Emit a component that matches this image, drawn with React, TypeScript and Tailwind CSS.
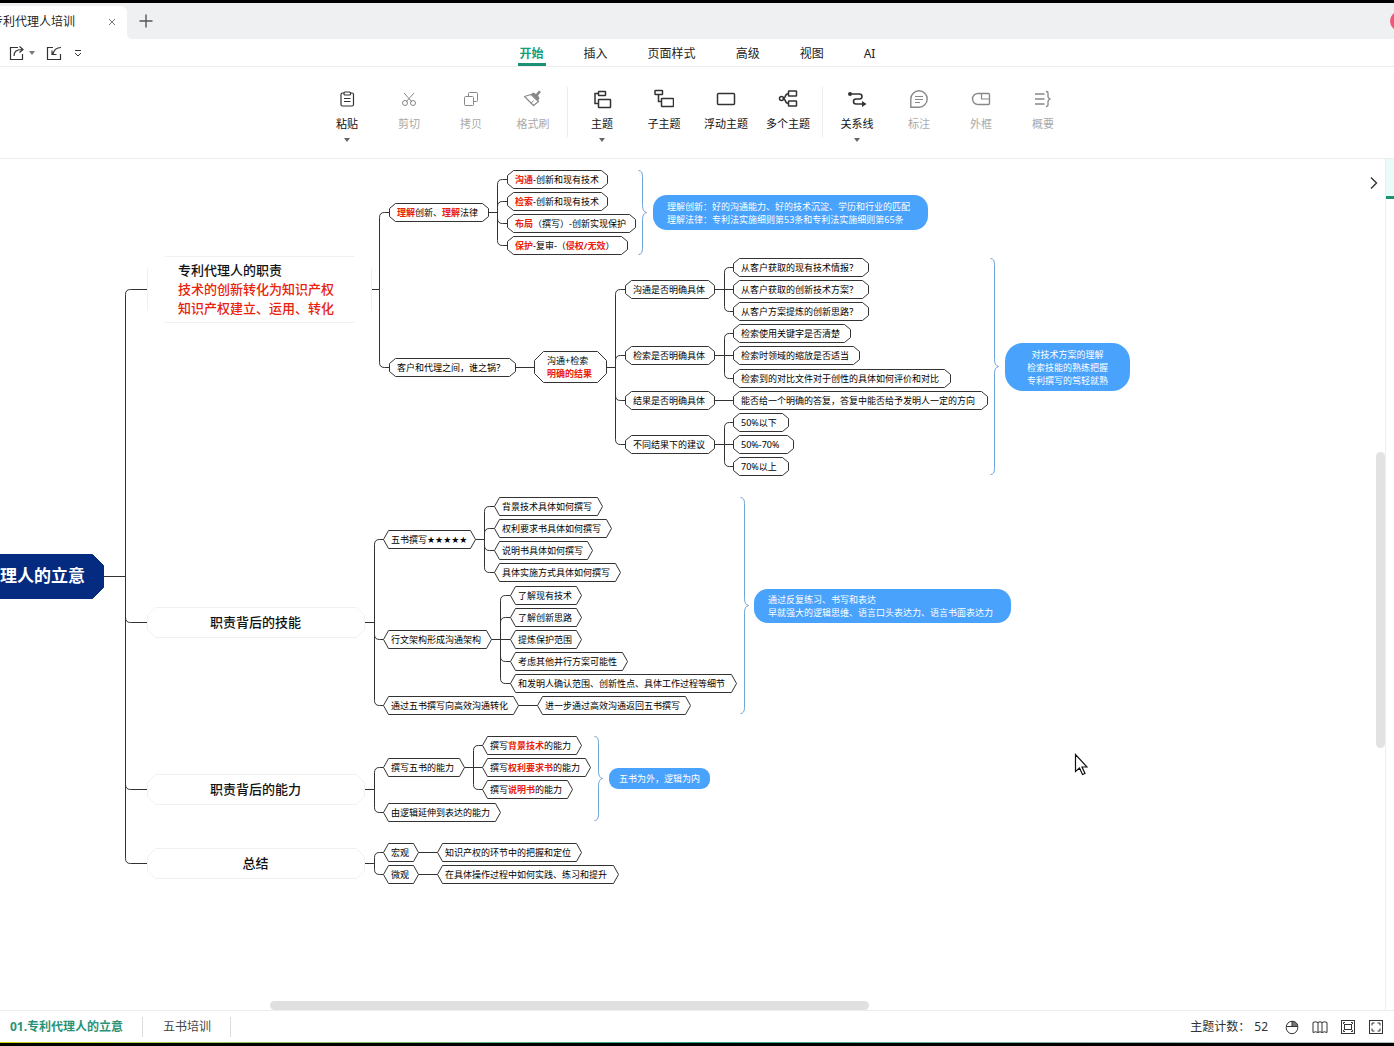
import React from "react";
import { clsx } from "clsx";

type Shape = "cut" | "hex" | "soft" | "root";

type Topic = {
	x: number;
	y: number;
	w: number;
	h?: number;
	shape: Shape;
	// lines of text, parts between asterisks are highlighted
	lines: string[];
	// x of the vertical line that leads to the children
	spine?: number;
	children?: Topic[];
};

const cut = (x: number, y: number, w: number, text: string, spine?: number, children?: Topic[]): Topic => ({
	x, y, w, shape: "cut", lines: [text], spine, children,
});

const hex = (x: number, y: number, w: number, text: string, spine?: number, children?: Topic[]): Topic => ({
	x, y, w, shape: "hex", lines: [text], spine, children,
});

const map: Topic = {
	x: -90, y: 395, w: 193, h: 44, shape: "root", lines: ["专利代理人的立意"], spine: 125,
	children: [
		{
			x: 147, y: 97, w: 224, h: 66, shape: "soft", spine: 379,
			lines: ["专利代理人的职责", "*技术的创新转化为知识产权*", "*知识产权建立、运用、转化*"],
			children: [
				cut(389, 44, 99, "*理解*创新、*理解*法律", 497, [
					cut(507, 11, 100, "*沟通*-创新和现有技术"),
					cut(507, 33, 100, "*检索*-创新和现有技术"),
					cut(507, 55, 128, "*布局*（撰写）-创新实现保护"),
					cut(507, 77, 120, "*保护*-复审-（*侵权/无效*）"),
				]),
				cut(389, 199, 126, "客户和代理之间，谁之锅？", 525, [
					{
						x: 534, y: 192, w: 72, h: 31, shape: "cut", spine: 615,
						lines: ["沟通+检索", "*明确的结果*"],
						children: [
							cut(625, 121, 89, "沟通是否明确具体", 724, [
								cut(733, 99, 135, "从客户获取的现有技术情报？"),
								cut(733, 121, 135, "从客户获取的创新技术方案？"),
								cut(733, 143, 135, "从客户方案提炼的创新思路？"),
							]),
							cut(625, 187, 89, "检索是否明确具体", 724, [
								cut(733, 165, 117, "检索使用关键字是否清楚"),
								cut(733, 187, 126, "检索时领域的缩放是否适当"),
								cut(733, 210, 217, "检索到的对比文件对于创性的具体如何评价和对比"),
							]),
							cut(625, 232, 89, "结果是否明确具体", 724, [
								cut(733, 232, 254, "能否给一个明确的答复，答复中能否给予发明人一定的方向"),
							]),
							cut(625, 276, 89, "不同结果下的建议", 724, [
								cut(733, 254, 55, "50%以下"),
								cut(733, 276, 60, "50%-70%"),
								cut(733, 298, 55, "70%以上"),
							]),
						],
					},
				]),
			],
		},
		{
			x: 147, y: 448, w: 217, h: 30, shape: "soft", lines: ["职责背后的技能"], spine: 374,
			children: [
				hex(383, 371, 92, "五书撰写★★★★★", 484, [
					hex(494, 338, 108, "背景技术具体如何撰写"),
					hex(494, 360, 117, "权利要求书具体如何撰写"),
					hex(494, 382, 98, "说明书具体如何撰写"),
					hex(494, 404, 126, "具体实施方式具体如何撰写"),
				]),
				hex(383, 471, 108, "行文架构形成沟通架构", 500, [
					hex(510, 427, 71, "了解现有技术"),
					hex(510, 449, 71, "了解创新思路"),
					hex(510, 471, 71, "提炼保护范围"),
					hex(510, 493, 117, "考虑其他并行方案可能性"),
					hex(510, 515, 226, "和发明人确认范围、创新性点、具体工作过程等细节"),
				]),
				hex(383, 537, 135, "通过五书撰写向高效沟通转化", 528, [
					hex(537, 537, 153, "进一步通过高效沟通返回五书撰写"),
				]),
			],
		},
		{
			x: 147, y: 615, w: 217, h: 30, shape: "soft", lines: ["职责背后的能力"], spine: 374,
			children: [
				hex(383, 599, 81, "撰写五书的能力", 473, [
					hex(482, 577, 99, "撰写*背景技术*的能力"),
					hex(482, 599, 108, "撰写*权利要求书*的能力"),
					hex(482, 621, 90, "撰写*说明书*的能力"),
				]),
				hex(383, 644, 117, "由逻辑延伸到表达的能力"),
			],
		},
		{
			x: 147, y: 689, w: 217, h: 30, shape: "soft", lines: ["总结"], spine: 374,
			children: [
				hex(383, 684, 35, "宏观", 428, [hex(437, 684, 144, "知识产权的环节中的把握和定位")]),
				hex(383, 706, 35, "微观", 428, [hex(437, 706, 181, "在具体操作过程中如何实践、练习和提升")]),
			],
		},
	],
};

const summaries = [
	{
		brace: { x: 638, top: 11, bottom: 95 },
		box: { left: 653, top: 36, width: 275, height: 35 },
		center: false,
		lines: ["理解创新：好的沟通能力、好的技术沉淀、学历和行业的匹配", "理解法律：专利法实施细则第53条和专利法实施细则第65条"],
	},
	{
		brace: { x: 990, top: 99, bottom: 315 },
		box: { left: 1005, top: 184, width: 125, height: 48 },
		center: true,
		lines: ["对技术方案的理解", "检索技能的熟练把握", "专利撰写的驾轻就熟"],
	},
	{
		brace: { x: 740, top: 338, bottom: 554 },
		box: { left: 754, top: 430, width: 257, height: 34 },
		center: false,
		lines: ["通过反复练习、书写和表达", "早就强大的逻辑思维、语言口头表达力、语言书面表达力"],
	},
	{
		brace: { x: 594, top: 577, bottom: 661 },
		box: { left: 609, top: 609, width: 101, height: 21 },
		center: true,
		lines: ["五书为外，逻辑为内"],
	},
];

const heightOf = (t: Topic) => t.h ?? 18;
const middleOf = (t: Topic) => t.y + heightOf(t) / 2;
const flatten = (t: Topic): Topic[] => [t, ...(t.children ?? []).flatMap(flatten)];
const topics = flatten(map);

function outline(t: Topic) {
	const h = heightOf(t);
	const r = t.x + t.w;
	const b = t.y + h;
	let cx = 6;
	let cy = 5;
	if (t.shape === "hex") {
		cx = 5;
		cy = h / 2;
	} else if (t.shape === "root") {
		cx = 11;
		cy = 11;
	} else if (t.shape === "soft") {
		cx = h > 40 ? 17 : 8;
		cy = h > 40 ? 12 : 8;
	} else if (h > 20) {
		cx = 9;
		cy = 9;
	}
	// the large soft card has open corners
	if (t.shape === "soft" && h > 40) {
		return `M${t.x + cx} ${t.y}H${r - cx}M${r} ${t.y + cy}V${b - cy}M${r - cx} ${b}H${t.x + cx}M${t.x} ${b - cy}V${t.y + cy}`;
	}
	return `M${t.x + cx} ${t.y}H${r - cx}L${r} ${t.y + cy}V${b - cy}L${r - cx} ${b}H${t.x + cx}L${t.x} ${b - cy}V${t.y + cy}Z`;
}

function link(parent: Topic, child: Topic) {
	const s = parent.spine ?? parent.x + parent.w + 9;
	const py = Math.round(middleOf(parent));
	const cy = Math.round(middleOf(child));
	const start = `M${parent.x + parent.w} ${py}H${s}`;
	if (Math.abs(py - cy) < 5) return `M${parent.x + parent.w} ${cy}H${child.x}`;
	const k = cy > py ? 5 : -5;
	return `${start}V${cy - k}Q${s} ${cy} ${s + 5} ${cy}H${child.x}`;
}

function brace({ x, top, bottom }: { x: number; top: number; bottom: number }) {
	const m = (top + bottom) / 2;
	return `M${x} ${top}Q${x + 4} ${top} ${x + 4} ${top + 6}V${m - 7}Q${x + 4} ${m - 1} ${x + 8} ${m}Q${x + 4} ${m + 1} ${x + 4} ${m + 7}V${bottom - 6}Q${x + 4} ${bottom} ${x} ${bottom}`;
}

const Plain = ({ text }: { text: string }) => (
	<>
		{text.split(/(★+)/).map((part, i) =>
			i % 2 ? (
				<span key={i} className="font-['DejaVu_Sans',sans-serif]">{part}</span>
			) : (
				<React.Fragment key={i}>{part}</React.Fragment>
			)
		)}
	</>
);

const Rich = ({ text, light }: { text: string; light?: boolean }) => (
	<span className="block">
		{text.split("*").map((part, i) =>
			i % 2 ? (
				<b key={i} className={clsx("text-[#e8220c]", light ? "font-medium" : "font-bold")}>{part}</b>
			) : (
				<Plain key={i} text={part} />
			)
		)}
	</span>
);

const TopicText = ({ topic }: { topic: Topic }) => {
	const multi = topic.lines.length > 1;
	return (
		<div
			className={clsx(
				"absolute flex items-center whitespace-nowrap",
				topic.shape === "root" && "justify-end pr-[18px] text-[17px] font-bold text-white",
				topic.shape === "soft" && "text-[13px] leading-[19px] font-medium text-[#111]",
				topic.shape === "soft" && (multi ? "pl-[31px]" : "justify-center"),
				(topic.shape === "cut" || topic.shape === "hex") && "text-[9px] leading-[13px] text-black",
				(topic.shape === "cut" || topic.shape === "hex") && (multi ? "pl-[13px]" : "pl-2")
			)}
			style={{ left: topic.x, top: topic.y, width: topic.w, height: heightOf(topic) + 1 }}
		>
			<div>
				{topic.lines.map((line) => (
					<Rich key={line} text={line} light={topic.shape === "soft"} />
				))}
			</div>
		</div>
	);
};

const MindMap = () => (
	<div className="absolute inset-0">
		<svg className="absolute inset-0 h-full w-full" fill="none">
			<g transform="translate(.5 .5)">
				{topics.flatMap((t) =>
					(t.children ?? []).map((c) => (
						<path key={`${t.x}-${c.x}-${c.y}`} d={link(t, c)} stroke="#333" />
					))
				)}
				{topics.map((t) => (
					<path
						key={`${t.x}-${t.y}`}
						d={outline(t)}
						fill={t.shape === "root" ? "#052b80" : "#fff"}
						stroke={t.shape === "root" ? "#052b80" : t.shape === "soft" ? "#f1f1f1" : "#333"}
						strokeLinejoin="round"
					/>
				))}
				{summaries.map((s) => (
					<path key={s.box.left} d={brace(s.brace)} stroke="#6ea4d8" />
				))}
			</g>
		</svg>
		{topics.map((t) => (
			<TopicText key={`${t.x}-${t.y}`} topic={t} />
		))}
		{summaries.map((s) => (
			<div
				key={s.box.left}
				className={clsx(
					"absolute flex items-center bg-[#49a2fc] text-[9px] leading-[13px] whitespace-nowrap text-white",
					s.lines.length === 3 ? "rounded-[18px]" : s.lines.length === 2 ? "rounded-[14px]" : "rounded-[9px]",
					s.center ? "justify-center text-center" : "pl-[14px]"
				)}
				style={s.box}
			>
				<div>
					{s.lines.map((line) => (
						<Rich key={line} text={line} />
					))}
				</div>
			</div>
		))}
	</div>
);

const Icon = ({ children, size = 20 }: { children: React.ReactNode; size?: number }) => (
	<svg width={size} height={size} viewBox={`0 0 ${size} ${size}`} fill="none" stroke="currentColor" aria-hidden="true">
		{children}
	</svg>
);

const tools = [
	[
		{
			label: "粘贴", menu: true,
			icon: <g strokeWidth="1.200"><rect x="4" y="4" width="12.500" height="13" rx="1.500" /><rect x="7" y="3" width="6.500" height="3" rx="1" fill="#fff" /><path d="M7 9.500h6.500M7 12.500h6.500" /></g>,
		},
		{
			label: "剪切", off: true,
			icon: <><path d="M5 4l8 9M15 4l-8 9" /><circle cx="6" cy="14" r="2.500" /><circle cx="14" cy="14" r="2.500" /></>,
		},
		{
			label: "拷贝", off: true,
			icon: <><rect x="3.500" y="7.500" width="9" height="9" rx="1" /><path d="M7.500 7.500v-3a1 1 0 0 1 1-1h7a1 1 0 0 1 1 1v7a1 1 0 0 1-1 1h-3" /></>,
		},
		{
			label: "格式刷", off: true,
			icon: <><path d="M1.500 7.500l6.500-2 7.500 7-5 4z" strokeWidth="1.200" strokeLinejoin="round" /><path d="M8 5l2.500-1.500 2.500 1.500 3-3.500 2 1.500-3 3.500 1.500 2.500-1.500 3z" fill="currentColor" stroke="none" /><path d="M8 14.500l2.500-3" /></>,
		},
	],
	[
		{
			label: "主题", menu: true,
			icon: <g strokeWidth="1.500"><rect x="6.500" y="2.500" width="7" height="4" rx=".5" /><rect x="6.500" y="10.500" width="12" height="8" rx=".5" /><path d="M6.500 4.500H3v10h3" /></g>,
		},
		{
			label: "子主题",
			icon: <g strokeWidth="1.500"><rect x="1" y="1.500" width="7.500" height="4" rx=".5" /><rect x="7.500" y="9.500" width="12" height="8" rx=".5" /><path d="M4.500 5.500v7h3" /></g>,
		},
		{ label: "浮动主题", icon: <rect x="1.500" y="4.500" width="17" height="11" rx="1" strokeWidth="1.500" /> },
		{
			label: "多个主题",
			icon: <g strokeWidth="1.500"><rect x="10.500" y="2" width="8" height="5" rx=".5" /><rect x="10.500" y="12" width="8" height="5" rx=".5" /><circle cx="3.500" cy="9.500" r="2" /><path d="M10.500 4.500c-2.500 0-3 2-3.500 3.500L5.500 9.500 7 11c.5 2 1 3.500 3.500 3.500" /></g>,
		},
	],
	[
		{
			label: "关系线", menu: true,
			icon: <><path d="M4 5h8.500a2.500 2.500 0 0 1 0 5H9a2.500 2.500 0 0 0 0 5h8" strokeWidth="1.600" /><circle cx="3" cy="5" r="2" fill="currentColor" stroke="none" /><path d="M15 12l4.500 3-4.500 3z" fill="currentColor" stroke="none" /></>,
		},
		{
			label: "标注", off: true,
			icon: <><path d="M1.800 18.200V10a8.200 8.200 0 1 1 8.200 8.200z" strokeWidth="1.400" /><path d="M6 7.500h8M6 10.500h8M6 13.500h5" strokeWidth="1.200" /></>,
		},
		{
			label: "外框", off: true,
			icon: <><path d="M7 4.500h10.500a1 1 0 0 1 1 1v9a1 1 0 0 1-1 1H7a5.500 5.500 0 0 1 0-11z" strokeWidth="1.400" /><path d="M10.500 4.500v5.500h8" strokeWidth="1.200" /></>,
		},
		{
			label: "概要", off: true,
			icon: <><path d="M2 5h9.500M2 10h9.500M2 15h9.500" strokeWidth="1.300" /><path d="M13 2.500h.5q1.500 0 1.500 1.500v3.500q0 1.500 2 2.500-2 1-2 2.500V16q0 1.500-1.500 1.500H13" strokeWidth="1.300" /></>,
		},
	],
] as { label: string; icon: React.ReactNode; menu?: boolean; off?: boolean }[][];

const menus = ["开始", "插入", "页面样式", "高级", "视图", "AI"];

const TabBar = () => (
	<header className="flex h-9 shrink-0 items-end overflow-hidden bg-[#eff0f2]">
		<div className="-ml-[21px] flex h-[33px] w-[148px] items-center justify-between rounded-t-md bg-white pr-2.5 pb-0.5 pl-3">
			<span className="whitespace-nowrap">专利代理人培训</span>
			<button aria-label="关闭标签页" className="text-[#777]">
				<Icon size={10}><path d="M2 2l6 6M8 2l-6 6" /></Icon>
			</button>
		</div>
		<svg width="6" height="6" className="text-white" aria-hidden="true"><path d="M0 0Q0 6 6 6H0z" fill="currentColor" /></svg>
		<button aria-label="新建标签页" className="mb-[11px] ml-1.5 text-[#555]">
			<Icon size={14}><path d="M7 .5v13M.5 7h13" strokeWidth="1.400" /></Icon>
		</button>
		<button aria-label="账户" className="-mr-4 mb-2 ml-auto size-5 rounded-full bg-[#f2557a]" />
	</header>
);

const MenuBar = () => (
	<nav className="grid h-7 shrink-0 grid-cols-[1fr_auto_1fr] border-b border-[#ededed]">
		<div className="flex items-center pl-[9px] text-[#333]">
			<button aria-label="分享" className="flex items-center gap-1">
				<Icon size={16}><path d="M9 2.500H1.500v12h12V9" strokeWidth="1.200" /><path d="M5 11c0-4 2-6.500 8-6.500M10.500 1.500l3.500 3-3.500 3" strokeWidth="1.200" /></Icon>
				<svg width="6" height="4" aria-hidden="true"><path d="M0 0h6L3 4z" fill="#777" /></svg>
			</button>
			<button aria-label="导入" className="ml-[11px]">
				<Icon size={16}><path d="M7 2.500H1.500v12h13V9" strokeWidth="1.200" /><path d="M15 2.500c-4 0-7 2-8 6.500M6 5.500V9.500h4.500" strokeWidth="1.200" /></Icon>
			</button>
			<button aria-label="更多" className="ml-3">
				<Icon size={8}><path d="M1 1.500h6M1 4l3 3 3-3" /></Icon>
			</button>
		</div>
		<div className="flex gap-10 pl-px">
			{menus.map((m, i) => (
				<button
					key={m}
					className={clsx("relative pt-[3px]", i === 0 ? "font-bold text-[#0fa07c]" : "text-[#222]")}
				>
					{m}
					{i === 0 && <span className="absolute inset-x-[-2px] bottom-0 h-[3px] bg-[#1c9274]" />}
				</button>
			))}
		</div>
	</nav>
);

const Ribbon = () => (
	<div className="flex h-[92px] shrink-0 justify-center border-b border-[#ededed] pr-1">
		{tools.map((group, g) => (
			<div key={group[0].label} className="flex">
				{g > 0 && <div className="mx-[3px] mt-5 h-[50px] w-px bg-[#ececec]" />}
				{group.map((t) => (
					<button
						key={t.label}
						disabled={t.off}
						className={clsx(
							"flex w-[62px] flex-col items-center pt-[22px]",
							t.off ? "text-[#888]" : "text-[#333]"
						)}
					>
						<Icon>{t.icon}</Icon>
						<span className={clsx("mt-[7px] text-[11px] leading-4 whitespace-nowrap", t.off ? "text-[#aaa]" : "text-[#111]")}>
							{t.label}
						</span>
						{t.menu && (
							<svg width="6" height="4" className="mt-1.5" aria-hidden="true"><path d="M0 0h6L3 4z" fill="#666" /></svg>
						)}
					</button>
				))}
			</div>
		))}
	</div>
);

const StatusBar = () => (
	<footer className="flex h-8 shrink-0 items-center border-t border-[#ededed] bg-white">
		<button className="h-5 pr-[19px] pl-2.5 font-bold text-[#2a9377]">01.专利代理人的立意</button>
		<button className="h-5 border-x border-[#ddd] pr-[19px] pl-5 text-[#444]">五书培训</button>
		<div className="ml-auto flex items-center gap-3 pr-2.5 text-[#333]">
			<span className="mr-1">主题计数：<span className="ml-1">52</span></span>
			<button aria-label="鼠标模式">
				<Icon size={16}><ellipse cx="8" cy="8.500" rx="5.800" ry="6.200" /><path d="M8 2.300v5.200h5.700C13.700 5 12 2.300 8 2.300z" fill="#777" /><path d="M2.200 7.500h11.600" /></Icon>
			</button>
			<button aria-label="导航图">
				<Icon size={16}><path d="M1 3.500q2.500-1.500 5 0 2-1.500 4 0 2.500-1.500 5 0v10q-2.500-1.500-5 0-2-1.500-4 0-2.500-1.500-5 0zM6 3.500v10M10 3.500v10" /></Icon>
			</button>
			<button aria-label="适应窗口">
				<Icon size={16}><rect x="1.500" y="1.500" width="13" height="13" /><rect x="4.500" y="5.500" width="7" height="5" /><path d="M3.500 5V3.500H5M11 3.500h1.500V5M3.500 11v1.500H5M11 12.500h1.500V11" /></Icon>
			</button>
			<button aria-label="全屏">
				<Icon size={16}><rect x="1.500" y="1.500" width="13" height="13" /><path d="M4 6.500V4h2.500M9.500 4H12v2.500M4 9.500V12h2.500M9.500 12H12V9.500" /></Icon>
			</button>
		</div>
	</footer>
);

export default function App() {
	return (
		<div className="flex h-screen flex-col overflow-hidden border-y-[3px] border-black bg-white font-['Noto_Sans','Noto_Sans_CJK_SC',sans-serif] text-xs text-[#222]">
			<TabBar />
			<MenuBar />
			<Ribbon />
			<div className="flex min-h-0 flex-1">
				<main className="relative flex-1 overflow-hidden">
					<MindMap />
					<button aria-label="收起面板" className="absolute top-[17px] right-[5px] text-[#333]">
						<Icon size={14}><path d="M5 1.500l5.500 5.500L5 12.500" strokeWidth="1.400" /></Icon>
					</button>
					<div className="absolute top-[293px] right-0 h-[296px] w-[9px] rounded-full bg-[#e2e2e2]" />
					<div className="absolute bottom-0 left-[270px] h-[9px] w-[599px] rounded-full bg-[#e0e0e0]" />
					<svg className="absolute top-[594px] left-[1074px]" width="14" height="24" viewBox="0 0 14 24" aria-hidden="true">
						<path d="M1.500 1.500v17l4-3.500 3 6.500 2.500-1-3-6.500h5z" fill="#fff" stroke="#111" strokeWidth="1.200" />
					</svg>
				</main>
				<aside className="w-[9px] shrink-0 border-l border-[#eee]">
					<div className="h-10 border-b-[3px] border-[#1c9274] bg-[#e9fbfa]" />
				</aside>
			</div>
			<StatusBar />
			<div className="h-px shrink-0 bg-linear-to-r from-[#c8d400] via-[#1fa58a] to-[#bbb]" />
		</div>
	);
}
